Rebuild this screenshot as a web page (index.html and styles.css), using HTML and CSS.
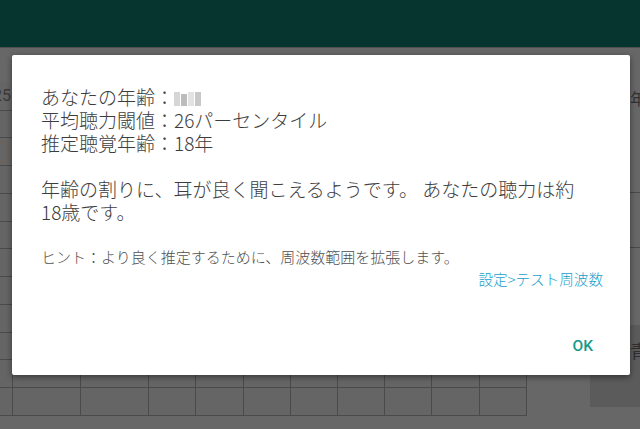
FILE: index.html
```html
<!DOCTYPE html>
<html lang="ja">
<head>
<meta charset="utf-8">
<link rel="stylesheet" href="styles.css">
</head>
<body>
<div class="screen">
  <header class="appbar"></header>
  <main class="content">
    <table class="grid">
      <colgroup>
        <col class="c-edge"><col class="c-wide"><col class="c-wide"><col class="c-n"><col class="c-n"><col class="c-n"><col class="c-n"><col class="c-n"><col class="c-n"><col class="c-n"><col class="c-n">
      </colgroup>
      <tr class="head"><td class="num">25</td><td></td><td></td><td></td><td></td><td></td><td></td><td></td><td></td><td></td><td></td></tr>
      <tr><td></td><td></td><td></td><td></td><td></td><td></td><td></td><td></td><td></td><td></td><td></td></tr>
      <tr><td><span class="mark"></span></td><td></td><td></td><td></td><td></td><td></td><td></td><td></td><td></td><td></td><td></td></tr>
      <tr><td></td><td></td><td></td><td></td><td></td><td></td><td></td><td></td><td></td><td></td><td></td></tr>
      <tr><td></td><td></td><td></td><td></td><td></td><td></td><td></td><td></td><td></td><td></td><td></td></tr>
      <tr><td></td><td></td><td></td><td></td><td></td><td></td><td></td><td></td><td></td><td></td><td></td></tr>
      <tr><td></td><td></td><td></td><td></td><td></td><td></td><td></td><td></td><td></td><td></td><td></td></tr>
      <tr><td></td><td></td><td></td><td></td><td></td><td></td><td></td><td></td><td></td><td></td><td></td></tr>
      <tr><td></td><td></td><td></td><td></td><td></td><td></td><td></td><td></td><td></td><td></td><td></td></tr>
      <tr><td></td><td></td><td></td><td></td><td></td><td></td><td></td><td></td><td></td><td></td><td></td></tr>
      <tr><td></td><td></td><td></td><td></td><td></td><td></td><td></td><td></td><td></td><td></td><td></td></tr>
      <tr><td></td><td></td><td></td><td></td><td></td><td></td><td></td><td></td><td></td><td></td><td></td></tr>
    </table>
    <aside class="side">
      <div class="side-title">年齢</div>
      <div class="side-row"></div>
      <div class="side-row"></div>
      <div class="side-box">青</div>
    </aside>
  </main>

  <div class="dialog" role="dialog">
    <p class="message">あなたの年齢：<span class="blur"><i></i><i></i><i></i><i></i></span><br>平均聴力閾値：26パーセンタイル<br>推定聴覚年齢：18年<br><br>年齢の割りに、耳が良く聞こえるようです。 あなたの聴力は約<br>18歳です。</p>
    <p class="hint">ヒント：より良く推定するために、周波数範囲を拡張します。</p>
    <a class="link">設定&gt;テスト周波数</a>
    <div class="actions"><button class="ok">OK</button></div>
  </div>
</div>
</body>
</html>
```
FILE: styles.css
```css
html, body {
  margin: 0;
  padding: 0;
}
body {
  width: 640px;
  height: 429px;
  overflow: hidden;
  background: #666666;
  font-family: "Noto Sans CJK JP", "Noto Sans", sans-serif;
}
.screen {
  position: relative;
  width: 640px;
  height: 429px;
  overflow: hidden;
}
.appbar {
  height: 47px;
  background: #06352f;
  border-bottom: 1px solid #4f4f4f;
}
.content {
  display: flex;
  height: 381px;
  background: #676767;
}
.grid {
  border-collapse: collapse;
  table-layout: fixed;
  width: 527px;
  margin-top: 34px;
  height: 334px;
  align-self: flex-start;
}
.c-edge { width: 12px; }
.c-wide { width: 68px; }
.c-n { width: 47px; }
.grid td {
  border: 1.5px solid #4a4a4a;
  height: 26px;
  padding: 0;
  background: #656565;
}
.grid tr.head td {
  border-top: none;
  height: 27px;
}
.grid td:first-child { border-left: none; }
.num {
  color: #3a3a3a;
  font-family: "Roboto", sans-serif;
  font-size: 16px;
  text-indent: -7px;
  overflow: hidden;
  white-space: nowrap;
}
.mark {
  display: block;
  width: 22px;
  height: 22px;
  margin-left: -12px;
  border-radius: 50%;
  border: 1.5px solid #7a5a55;
  box-sizing: border-box;
}
.side {
  margin-left: auto;
  width: 50px;
  display: flex;
  flex-direction: column;
}
.side-title {
  padding: 40px 0 0 40px;
  font-size: 16px;
  line-height: 20px;
  color: #333;
  white-space: nowrap;
  height: 50px;
}
.side-row {
  height: 54px;
  border-bottom: 1.5px solid #4a4a4a;
}
.side-row:first-of-type { height: 29px; }
.side-box {
  margin-top: 77px;
  height: 82px;
  background: #5b5b5b;
  padding: 12px 0 0 40px;
  box-sizing: border-box;
  font-size: 18px;
  color: #2e2e2e;
  white-space: nowrap;
}

.dialog {
  position: absolute;
  left: 12px;
  top: 55px;
  width: 618px;
  height: 320px;
  box-sizing: border-box;
  background: #ffffff;
  border-radius: 2px;
  box-shadow: 0 2px 6px rgba(0,0,0,0.45);
  display: flex;
  flex-direction: column;
  padding: 0 27px 0 29px;
  color: #3d3d3d;
  font-weight: 300;
}
.message {
  margin: 30px 0 0;
  font-size: 19px;
  line-height: 23px;
}
.blur {
  display: inline-flex;
  gap: 1px;
  vertical-align: -1px;
}
.blur i {
  display: block;
  width: 6px;
  height: 14px;
  background: #d6d6d6;
}
.blur i:nth-child(2) { background: #bcbcbc; height: 12px; margin-top: 2px; }
.blur i:nth-child(3) { background: #e2e2e2; }
.blur i:nth-child(4) { background: #c8c8c8; }
.hint {
  margin: 24px 0 0;
  font-size: 15px;
  line-height: 20px;
  color: #4f4f4f;
}
.link {
  align-self: flex-end;
  margin-top: 2px;
  font-size: 14.6px;
  line-height: 20px;
  color: #1a9ecb;
}
.actions {
  margin-top: auto;
  margin-bottom: 11px;
  display: flex;
  justify-content: flex-end;
}
.ok {
  border: none;
  background: none;
  font-family: "Roboto", sans-serif;
  font-weight: 500;
  font-size: 15.5px;
  color: #139a8a;
  height: 36px;
  padding: 0 10px;
}
```
